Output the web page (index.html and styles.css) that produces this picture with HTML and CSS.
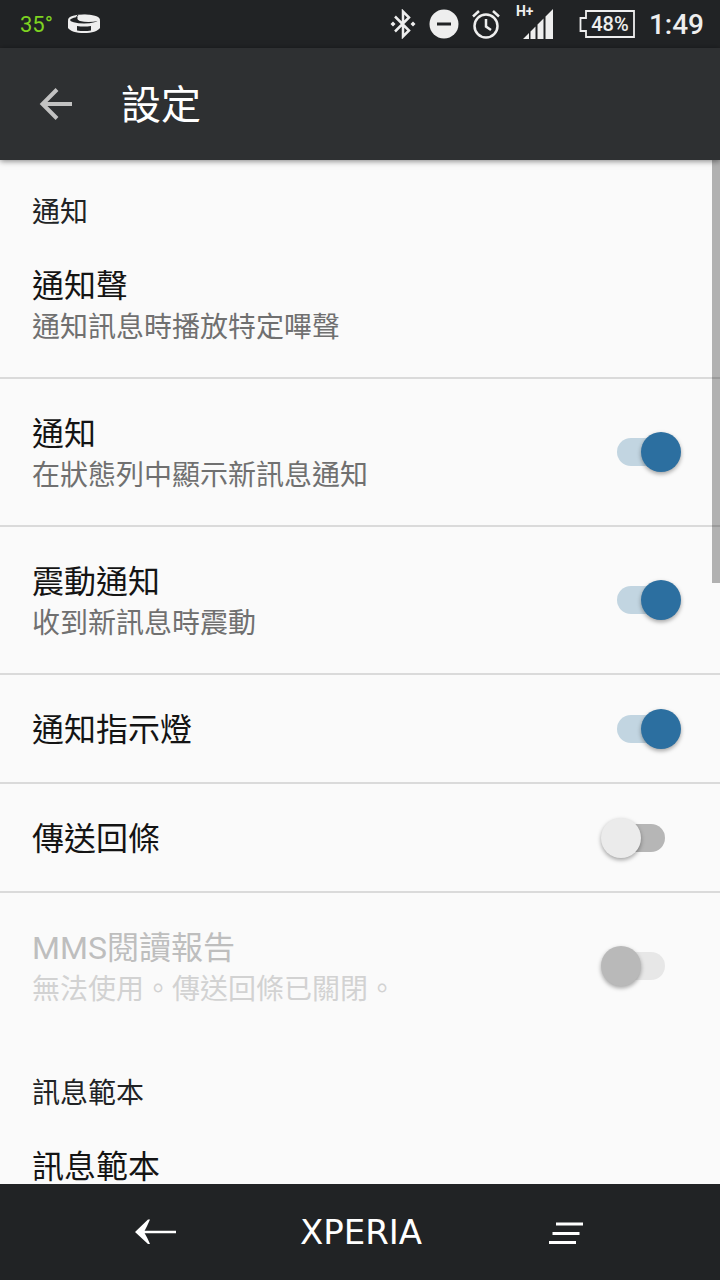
FILE: index.html
```
<!DOCTYPE html>
<html lang="zh-Hant">
<head>
    <meta charset="UTF-8">
    <meta name="viewport" content="width=device-width, initial-scale=1.0">
    <title>設定</title>
    <link rel="stylesheet" href="styles.css">
</head>
<body>

<div class="status-bar">
    <span class="temperature">35°</span>
    <svg class="band-icon" width="32" height="20" viewBox="0 0 32 20">
        <path d="M0 6v8c2 3 8 5 16 5s14-2 16-5V6c-2 3-8 4.500-16 4.500S2 9 0 6z" fill="#eee"/>
        <path d="M9 12q7 1 14 0v4.500q-7 1-14 0z" fill="#212325"/>
        <ellipse cx="16" cy="6" rx="15" ry="4.600" fill="none" stroke="#eee" stroke-width="2"/>
        <path d="M10 2Q16 0 23 1.500Q31 3 30 7Q20 9 12 7Q8 6 10 2z" fill="#eee"/>
        <path d="M10 1Q6 5 11 7.500" fill="none" stroke="#212325"/>
    </svg>
    <div class="status-icons">
        <svg width="26" height="30" viewBox="0 0 26 30" fill="none" stroke="#eee" stroke-width="2.500">
            <path d="M5 7.500l14 14-6 6v-25l6 6-14 14"/>
            <path d="M3 12.500l2.500 2.500L3 17.500.500 15zM23 12.500l2.500 2.500-2.500 2.500-2.500-2.500z" fill="#eee" stroke="none"/>
        </svg>
        <svg width="30" height="30" viewBox="0 0 30 30">
            <circle cx="15" cy="15" r="14.500" fill="#eee"/>
            <path d="M8 15h14" stroke="#212325" stroke-width="3"/>
        </svg>
        <svg width="28" height="30" viewBox="0 0 28 30" fill="none" stroke="#eee" stroke-width="2.500">
            <circle cx="14" cy="17" r="11.500"/>
            <path d="M14 10v7.500l5 3.500M1 7.500l6-5.500M27 7.500l-6-5.500"/>
        </svg>
        <div class="signal">
            <span class="network">H+</span>
            <svg width="32" height="32" viewBox="0 0 32 32" fill="#eee">
                <path d="M1 32l6-6v6zM8.500 32v-7.500l5-5V32zM15.500 32V17.500l6-6V32zM23.500 32V9.500L31 2v30z"/>
            </svg>
        </div>
        <div class="battery">
            <svg width="56" height="30" viewBox="0 0 56 30" fill="none" stroke="#eee" stroke-width="1.800">
                <path d="M7 2h48v26H7v-6H1.500V9H7z"/>
            </svg>
            <span class="battery-level">48%</span>
        </div>
    </div>
    <span class="clock">1:49</span>
</div>

<header class="app-bar">
    <button class="back" type="button" aria-label="返回">
        <svg width="34" height="34" viewBox="0 0 34 34" fill="none" stroke="#c2c2c2" stroke-width="4">
            <path d="M33 17H4M18 2.500L3.500 17 18 31.500"/>
        </svg>
    </button>
    <h1>設定</h1>
</header>

<main class="content">
    <section class="group">
        <h2>通知</h2>
        <a class="item" href="#sound">
            <span class="text">
                <span class="title">通知聲</span>
                <span class="summary">通知訊息時播放特定嗶聲</span>
            </span>
        </a>
        <label class="item" for="notify">
            <span class="text">
                <span class="title">通知</span>
                <span class="summary">在狀態列中顯示新訊息通知</span>
            </span>
            <input class="switch" type="checkbox" id="notify" checked>
        </label>
        <label class="item" for="vibrate">
            <span class="text">
                <span class="title">震動通知</span>
                <span class="summary">收到新訊息時震動</span>
            </span>
            <input class="switch" type="checkbox" id="vibrate" checked>
        </label>
        <label class="item" for="led">
            <span class="text">
                <span class="title">通知指示燈</span>
            </span>
            <input class="switch" type="checkbox" id="led" checked>
        </label>
        <label class="item" for="receipt">
            <span class="text">
                <span class="title">傳送回條</span>
            </span>
            <input class="switch" type="checkbox" id="receipt">
        </label>
        <label class="item disabled" for="mms">
            <span class="text">
                <span class="title">MMS閱讀報告</span>
                <span class="summary">無法使用。傳送回條已關閉。</span>
            </span>
            <input class="switch" type="checkbox" id="mms" disabled>
        </label>
    </section>
    <section class="group">
        <h2>訊息範本</h2>
        <a class="item" href="#templates">
            <span class="text">
                <span class="title">訊息範本</span>
            </span>
        </a>
    </section>
    <div class="scrollbar"></div>
</main>

<nav class="nav-bar">
    <button type="button" aria-label="返回">
        <svg width="42" height="26" viewBox="0 0 42 26">
            <path d="M5 13h36" stroke="#fff" stroke-width="2.500"/>
            <path d="M0 13L13 .500h2q-3 7-6 12.500 3 5 6 12h-2z" fill="#fff"/>
        </svg>
    </button>
    <button class="home" type="button">XPERIA</button>
    <button type="button" aria-label="最近使用">
        <svg width="36" height="24" viewBox="0 0 36 24" stroke="#fff" stroke-width="3">
            <path d="M8 4h27M4.500 13.500h27M1 22.500h27"/>
        </svg>
    </button>
</nav>

</body>
</html>
```
FILE: styles.css
```
* {
    box-sizing: border-box;
}
body {
    display: flex;
    flex-direction: column;
    height: 100vh;
    margin: 0;
    background: #fafafa;
    color: #141414;
    font-family: Roboto, "Noto Sans CJK TC", sans-serif;
}
button {
    padding: 0;
    border: none;
    background: none;
    color: inherit;
    font: inherit;
    cursor: pointer;
}
svg {
    display: block;
}

/* status bar */
.status-bar {
    display: flex;
    align-items: center;
    height: 48px;
    padding: 0 16px 0 20px;
    background: #212325;
    color: #eee;
}
.temperature {
    color: #7ed321;
    font-size: 22px;
}
.band-icon {
    margin-left: 15px;
}
.status-icons {
    display: flex;
    align-items: center;
    gap: 13px;
    margin-left: auto;
}
.signal {
    display: flex;
    position: relative;
    margin: 0 12px 0 9px;
    padding-bottom: 2px;
}
.network {
    position: absolute;
    top: -4px;
    left: -6px;
    font-size: 14px;
    font-weight: 700;
    line-height: 16px;
}
.battery {
    display: grid;
    align-items: center;
}
.battery svg,
.battery-level {
    grid-area: 1 / 1;
}
.battery-level {
    padding-left: 6px;
    font-size: 20px;
    font-weight: 500;
    text-align: center;
}
.clock {
    margin-left: 14px;
    font-size: 28px;
    font-weight: 500;
}

/* app bar */
.app-bar {
    display: flex;
    align-items: center;
    gap: 48px;
    height: 112px;
    padding: 0 39px;
    background: #2e3032;
    color: #fff;
    box-shadow: 0 1px 6px rgba(0, 0, 0, 0.5);
    z-index: 1;
}
.app-bar h1 {
    margin: 0;
    padding-top: 4px;
    font-size: 40px;
    font-weight: 400;
    line-height: 48px;
}

/* settings list */
.content {
    position: relative;
    flex: 1;
    min-height: 0;
    overflow: hidden;
}
.group h2 {
    margin: 0;
    padding: 35px 32px 0;
    color: #212325;
    font-size: 28px;
    font-weight: 400;
    line-height: 36px;
}
.item {
    display: flex;
    align-items: center;
    padding: 30px 39px 30px 32px;
    border-bottom: 2px solid #dadada;
    color: inherit;
    text-decoration: none;
}
.item:last-child {
    border-color: transparent;
}
.text {
    flex: 1;
    padding-top: 3px;
}
.title,
.summary {
    display: block;
}
.title {
    font-size: 32px;
    line-height: 44px;
}
.summary {
    color: #707070;
    font-size: 28px;
    line-height: 39px;
}
.disabled .title {
    color: #bebebe;
}
.disabled .summary {
    color: #d2d2d2;
}
.scrollbar {
    position: absolute;
    top: 0;
    right: 0;
    width: 8px;
    height: 423px;
    background: rgba(0, 0, 0, 0.29);
}

/* switch */
.switch {
    display: grid;
    align-items: center;
    width: 80px;
    height: 40px;
    margin: 0;
    appearance: none;
}
.switch::before,
.switch::after {
    content: "";
    grid-area: 1 / 1;
}
.switch::before {
    height: 28px;
    margin: 0 16px;
    border-radius: 14px;
    background: #b6b6b6;
}
.switch::after {
    width: 40px;
    height: 40px;
    border-radius: 50%;
    background: #ebebeb;
    box-shadow: 0 2px 4px rgba(0, 0, 0, 0.35);
}
.switch:checked::before {
    background: #c2d5e1;
}
.switch:checked::after {
    justify-self: end;
    background: #2c6fa0;
}
.switch:disabled::before {
    background: #e7e7e7;
}
.switch:disabled::after {
    background: #b9b9b9;
}

/* navigation bar */
.nav-bar {
    display: grid;
    grid-template-columns: 1fr 1fr 1fr;
    align-items: center;
    height: 96px;
    padding: 0 52px 0 54px;
    background: #212325;
    color: #fff;
}
.nav-bar svg {
    margin: auto;
}
.home {
    font-family: "DejaVu Sans", sans-serif;
    font-size: 34px;
    line-height: 40px;
}
```
